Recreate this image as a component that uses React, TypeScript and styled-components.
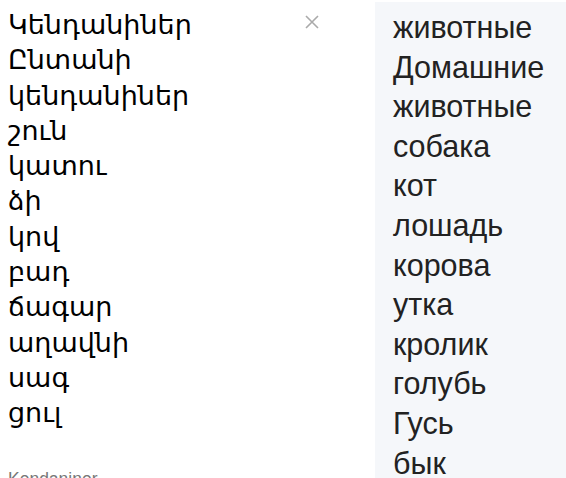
import styled, { createGlobalStyle } from "styled-components";

const GlobalStyle = createGlobalStyle`
  body {
    margin: 0;
    background: #fff;
    font-family: "Liberation Sans", Arial, sans-serif;
  }
`;

const Page = styled.div`
  display: grid;
  grid-template-columns: 375px 1fr;
  width: 566px;
  height: 478px;
  overflow: hidden;
`;

const Source = styled.div`
  position: relative;
  padding: 7px 0 0 8px;
`;

const SourceText = styled.div`
  font-family: "DejaVu Sans", sans-serif;
  font-size: 27px;
  line-height: 35.3px;
  color: #000;
`;

const ClearButton = styled.button`
  position: absolute;
  top: 15px;
  left: 305px;
  width: 14px;
  height: 14px;
  padding: 0;
  border: none;
  background: none;
  cursor: pointer;
`;

const Translit = styled.div`
  margin-top: 38px;
  font-size: 17.5px;
  color: #777;
`;

const Target = styled.div`
  margin-top: 2px;
  background: #f5f7fa;
  padding: 6px 0 0 18px;
`;

const TargetText = styled.div`
  font-size: 30.5px;
  line-height: 39.6px;
  color: #222;
`;

const source = [
  "Կենդանիներ",
  "Ընտանի",
  "կենդանիներ",
  "շուն",
  "կատու",
  "ձի",
  "կով",
  "բադ",
  "ճագար",
  "աղավնի",
  "սագ",
  "ցուլ",
];

const target = [
  "животные",
  "Домашние",
  "животные",
  "собака",
  "кот",
  "лошадь",
  "корова",
  "утка",
  "кролик",
  "голубь",
  "Гусь",
  "бык",
];

export default function App() {
  return (
    <>
      <GlobalStyle />
      <Page>
        <Source>
          <SourceText>
            {source.map((w, i) => (
              <div key={i}>{w}</div>
            ))}
          </SourceText>
          <ClearButton aria-label="Clear">
            <svg width="14" height="14" viewBox="0 0 14 14">
              <path d="M1 1L13 13M13 1L1 13" stroke="#aaa" strokeWidth="1.6" />
            </svg>
          </ClearButton>
          <Translit>Kendaniner</Translit>
        </Source>
        <Target>
          <TargetText>
            {target.map((w, i) => (
              <div key={i}>{w}</div>
            ))}
          </TargetText>
        </Target>
      </Page>
    </>
  );
}
